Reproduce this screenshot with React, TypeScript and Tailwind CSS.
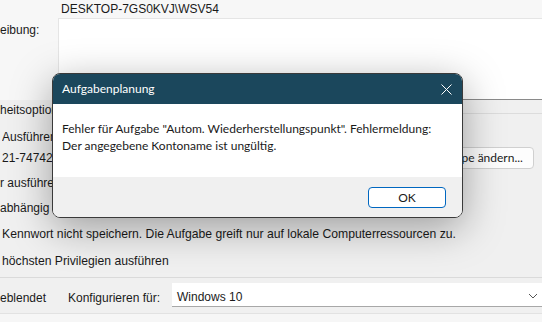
export default function App() {
  const bgFont = { fontFamily: '"Liberation Sans", Arial, sans-serif' };
  const dlgFont = { fontFamily: 'Lato, "Noto Sans", sans-serif' };

  return (
    <div className="relative h-[322px] w-[542px] overflow-hidden bg-[#f0f0f0] text-[12px] text-[#1a1a1a]" style={bgFont}>
      {/* background property page */}
      <div className="flex flex-col">
        <div className="flex h-[18px] items-center bg-[#f7f7f7] pl-[61px] leading-[14px]">
          DESKTOP-7GS0KVJ\WSV54
        </div>
        <div className="flex h-[82px] bg-[#f7f7f7]">
          <div className="w-[58px] pt-[5px] leading-[14px]">eibung:</div>
          <div className="flex-1 border-l border-t border-b border-l-[#e5e5e5] border-t-[#e5e5e5] border-b-[#8a8a8a] bg-white" />
        </div>

        <div className="flex h-[20px] items-center leading-[14px]">
          <span className="w-[52px] overflow-hidden whitespace-nowrap">heitsoptionen</span>
          <div className="ml-1 mt-[6px] h-px flex-1 bg-[#dcdcdc]" />
        </div>
        <div className="mt-[7px] flex h-[20px] items-center pl-[2px] leading-[14px]">
          <span className="w-[50px] overflow-hidden whitespace-nowrap">Ausführen der Aufgabe</span>
        </div>
        <div className="flex h-[22px] items-center justify-between pl-[2px] pr-[8px] leading-[14px]">
          <span className="w-[50px] overflow-hidden whitespace-nowrap">21-7474219011</span>
          <button className="h-[22px] w-[110px] whitespace-nowrap rounded-[4px] border border-[#d0d0d0] bg-[#fdfdfd] text-[12px] leading-[14px]" style={dlgFont}>
            Gruppe ändern...
          </button>
        </div>
        <div className="mt-[4px] flex h-[20px] items-center leading-[14px]">
          <span className="w-[52px] overflow-hidden whitespace-nowrap">r ausführen</span>
        </div>
        <div className="mt-[5px] flex h-[20px] items-center leading-[14px]">
          <span className="w-[52px] overflow-hidden whitespace-nowrap">abhängig von</span>
        </div>
        <div className="mt-[6px] flex h-[20px] items-center pl-[2px] text-[12.2px] leading-[14px]">
          Kennwort nicht speichern. Die Aufgabe greift nur auf lokale Computerressourcen zu.
        </div>
        <div className="mt-[7px] flex h-[20px] items-center pl-[2px] text-[12.2px] leading-[14px]">
          höchsten Privilegien ausführen
        </div>
        <div className="mt-[6px] h-px bg-[#dadada]" />
        <div className="mt-[5px] flex h-[24px] items-center leading-[14px]">
          <span className="w-[68px] pt-[5px]">eblendet</span>
          <span className="w-[104px] pt-[5px]">Konfigurieren für:</span>
          <div className="flex h-[24px] flex-1 items-center justify-between border-b border-b-[#a8a8a8] bg-white pl-[5px] pr-[4px]">
            <span className="pt-[5px]">Windows 10</span>
            <svg width="10" height="6" viewBox="0 0 10 6" className="mt-[3px]">
              <path d="M1 1l4 4 4-4" fill="none" stroke="#555" strokeWidth="1" />
            </svg>
          </div>
        </div>
        <div className="mt-[6px] h-px bg-[#e2e2e2]" />
        <div className="h-[10px] bg-[#f6f6f6]" />
      </div>

      {/* error dialog */}
      <div
        className="absolute left-[52px] top-[73px] flex h-[145px] w-[411px] flex-col overflow-hidden rounded-[8px] border border-[#3a3a3a] shadow-[0_10px_40px_rgba(0,0,0,0.35)]"
        style={dlgFont}
      >
        <div className="flex h-[30px] items-center justify-between bg-[#1b475c] pl-[9px] pr-[10px] text-[12px] text-white">
          <span>Aufgabenplanung</span>
          <svg width="11" height="11" viewBox="0 0 11 11">
            <path d="M0.5 0.5l10 10M10.5 0.5l-10 10" stroke="#ffffff" strokeWidth="1" />
          </svg>
        </div>
        <div className="h-[73px] whitespace-nowrap bg-white px-[9px] pt-[16px] text-[12px] leading-[17px] text-[#1a1a1a]">
          <div>Fehler für Aufgabe "Autom. Wiederherstellungspunkt". Fehlermeldung:</div>
          <div>Der angegebene Kontoname ist ungültig.</div>
        </div>
        <div className="flex flex-1 items-start justify-end bg-[#f0f0f0] pr-[16px] pt-[10px]">
          <button className="h-[21px] w-[78px] rounded-[4px] border border-[#0067c0] bg-white text-[12px] text-[#1a1a1a]">
            OK
          </button>
        </div>
      </div>
    </div>
  );
}
